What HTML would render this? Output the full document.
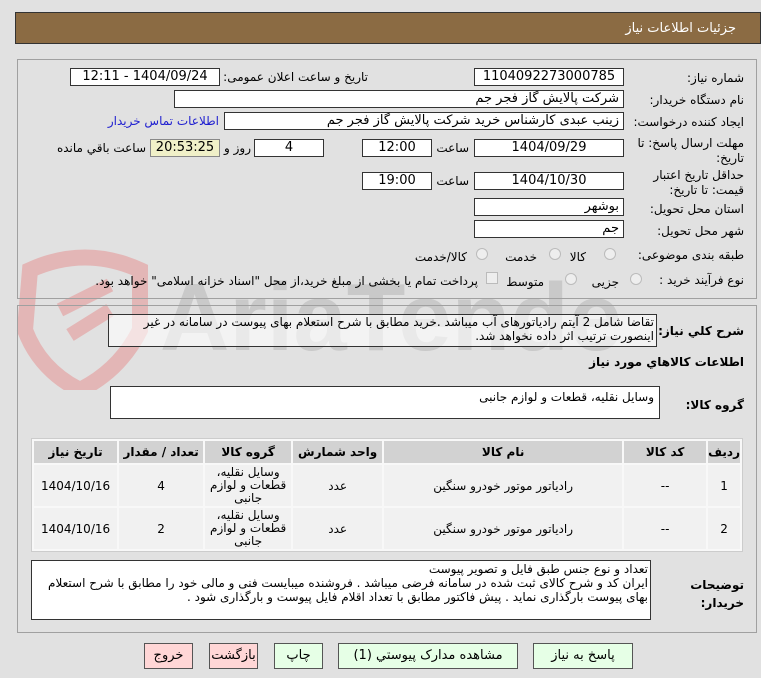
<!DOCTYPE html>
<html><head><meta charset="utf-8"><style>
*{box-sizing:border-box;margin:0;padding:0}
body{width:761px;height:678px;background:#e1e1e1;font-family:Tahoma,"DejaVu Sans","Liberation Sans",sans-serif;font-size:12px;color:#000;position:relative;overflow:hidden}
.a{position:absolute}
.hdr{left:15px;top:12px;width:746px;height:32px;background:#8b6b43;border:1px solid #333}
.hdr span{position:absolute;right:24px;top:8px;color:#fff;font-size:13px}
.pnl{border:1px solid #a0a0a0}
.box{position:absolute;background:#fff;border:1px solid #333;height:18px;text-align:center;line-height:16px;direction:rtl;font-size:13px}
.lbl{position:absolute;direction:rtl;white-space:nowrap;text-align:right}
.r{text-align:right;padding-right:4px}
table{border-collapse:separate;border-spacing:2px;background:#f8f8f8;border:1px solid #ccc}
th{background:#d2d2d2;font-weight:bold;height:22px;font-size:12px}
td{background:#f1f1f1;text-align:center;font-size:12px}
.btn{position:absolute;top:643px;height:26px;border:1px solid #555;text-align:center;line-height:24px;font-size:13px;direction:rtl}
.g{background:#e6ffe6}.p{background:#ffd6d6}
.rad{position:absolute;width:12px;height:12px;border-radius:50%;border:1px solid #bbb;background:#eee}
</style></head><body>
<svg class="a" style="left:0;top:240px" width="620" height="150">
<path d="M30 30 Q85 5 140 30 L140 90 Q120 130 80 150 Q40 130 25 90 Z" fill="none" stroke="#e3b6b6" stroke-width="16"/>
<path d="M60 70 L110 45 M70 95 L110 70" stroke="#e3b6b6" stroke-width="14"/>
<text x="160" y="110" font-family="Liberation Sans" font-weight="bold" font-size="96" fill="#c9c9c9">AriaTender.net</text>
</svg>
<div class="a hdr"><span>جزئیات اطلاعات نیاز</span></div>
<div class="a pnl" style="left:17px;top:59px;width:740px;height:240px"></div>
<div class="a pnl" style="left:17px;top:305px;width:740px;height:328px"></div>

<div class="lbl" style="right:17px;top:71px">شماره نیاز:</div>
<div class="box" style="left:474px;top:68px;width:150px">1104092273000785</div>
<div class="lbl" style="right:393px;top:70px">تاریخ و ساعت اعلان عمومی:</div>
<div class="box" style="left:70px;top:68px;width:150px">1404/09/24 - 12:11</div>

<div class="lbl" style="right:17px;top:93px">نام دستگاه خریدار:</div>
<div class="box r" style="left:174px;top:90px;width:450px">شرکت پالایش گاز فجر جم</div>

<div class="lbl" style="right:17px;top:115px">ایجاد کننده درخواست:</div>
<div class="box r" style="left:224px;top:112px;width:400px">زینب عبدی کارشناس خرید شرکت پالایش گاز فجر جم</div>
<div class="lbl" style="right:542px;top:114px;color:#2020d0">اطلاعات تماس خریدار</div>

<div class="lbl" style="right:17px;top:136px;line-height:15px">مهلت ارسال پاسخ: تا<br>تاریخ:</div>
<div class="box" style="left:474px;top:139px;width:150px">1404/09/29</div>
<div class="lbl" style="right:292px;top:141px">ساعت</div>
<div class="box" style="left:362px;top:139px;width:70px">12:00</div>
<div class="box" style="left:254px;top:139px;width:70px">4</div>
<div class="lbl" style="right:510px;top:141px">روز و</div>
<div class="box" style="left:150px;top:139px;width:70px;background:#f0f0c8;border-color:#888">20:53:25</div>
<div class="lbl" style="right:615px;top:141px">ساعت باقي مانده</div>

<div class="lbl" style="right:17px;top:168px;line-height:15px">حداقل تاریخ اعتبار<br>قیمت: تا تاریخ:</div>
<div class="box" style="left:474px;top:172px;width:150px">1404/10/30</div>
<div class="lbl" style="right:292px;top:174px">ساعت</div>
<div class="box" style="left:362px;top:172px;width:70px">19:00</div>

<div class="lbl" style="right:17px;top:202px">استان محل تحویل:</div>
<div class="box r" style="left:474px;top:198px;width:150px">بوشهر</div>
<div class="lbl" style="right:17px;top:224px">شهر محل تحویل:</div>
<div class="box r" style="left:474px;top:220px;width:150px">جم</div>

<div class="lbl" style="right:17px;top:248px">طبقه بندی موضوعی:</div>
<div class="rad" style="left:604px;top:248px"></div><div class="lbl" style="right:175px;top:250px">کالا</div>
<div class="rad" style="left:549px;top:248px"></div><div class="lbl" style="right:224px;top:250px">خدمت</div>
<div class="rad" style="left:476px;top:248px"></div><div class="lbl" style="right:294px;top:250px">کالا/خدمت</div>

<div class="lbl" style="right:17px;top:273px">نوع فرآیند خرید :</div>
<div class="rad" style="left:630px;top:273px"></div><div class="lbl" style="right:142px;top:275px">جزیی</div>
<div class="rad" style="left:565px;top:273px"></div><div class="lbl" style="right:217px;top:275px">متوسط</div>
<div class="a" style="left:486px;top:272px;width:12px;height:12px;border:1px solid #bbb;background:#eee"></div>
<div class="lbl" style="right:283px;top:274px">پرداخت تمام یا بخشی از مبلغ خرید،از محل "اسناد خزانه اسلامی" خواهد بود.</div>

<div class="lbl" style="right:17px;top:324px;font-weight:bold">شرح كلي نياز:</div>
<div class="box" style="left:108px;top:314px;width:549px;height:33px;background:rgba(255,255,255,.6);text-align:right;padding-right:2px;line-height:14px;font-size:12px">تقاضا شامل 2 آیتم رادیاتورهای آب میباشد .خرید مطابق با شرح استعلام بهای پیوست در سامانه در غیر اینصورت ترتیب اثر داده نخواهد شد.</div>
<div class="lbl" style="right:17px;top:355px;font-weight:bold">اطلاعات كالاهاي مورد نياز</div>
<div class="lbl" style="right:17px;top:398px;font-weight:bold">گروه کالا:</div>
<div class="box" style="left:110px;top:386px;width:550px;height:33px;text-align:right;padding:3px 5px;line-height:14px;font-size:12px">وسایل نقلیه، قطعات و لوازم جانبی</div>

<table class="a" style="left:31px;top:438px;width:712px;height:114px;direction:rtl">
<tr><th style="width:27px">ردیف</th><th style="width:82px">کد کالا</th><th style="width:238px">نام کالا</th><th style="width:89px">واحد شمارش</th><th style="width:86px">گروه کالا</th><th style="width:84px">تعداد / مقدار</th><th>تاریخ نیاز</th></tr>
<tr><td>1</td><td>--</td><td>رادیاتور موتور خودرو سنگین</td><td>عدد</td><td style="line-height:13px">وسایل نقلیه، قطعات و لوازم جانبی</td><td>4</td><td>1404/10/16</td></tr>
<tr><td>2</td><td>--</td><td>رادیاتور موتور خودرو سنگین</td><td>عدد</td><td style="line-height:13px">وسایل نقلیه، قطعات و لوازم جانبی</td><td>2</td><td>1404/10/16</td></tr>
</table>

<div class="lbl" style="right:17px;top:576px;font-weight:bold;line-height:18px">توضیحات<br>خریدار:</div>
<div class="box" style="left:31px;top:560px;width:620px;height:60px;text-align:right;padding:1px 2px;line-height:14px;font-size:12px">تعداد و نوع جنس طبق فایل و تصویر پیوست<br>ایران کد و شرح کالای ثبت شده در سامانه فرضی میباشد . فروشنده میبایست فنی و مالی خود را مطابق با شرح استعلام بهای پیوست بارگذاری نماید . پیش فاکتور مطابق با تعداد اقلام فایل پیوست و بارگذاری شود .</div>

<div class="btn g" style="left:533px;width:100px">پاسخ به نیاز</div>
<div class="btn g" style="left:338px;width:180px">مشاهده مدارک پیوستي (1)</div>
<div class="btn g" style="left:274px;width:49px">چاپ</div>
<div class="btn p" style="left:209px;width:49px">بازگشت</div>
<div class="btn p" style="left:144px;width:49px">خروج</div>
</body></html>
